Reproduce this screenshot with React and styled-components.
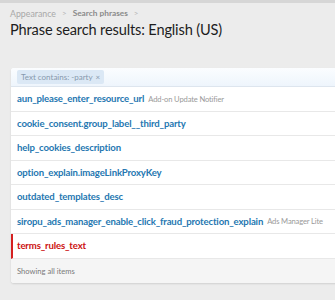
import React from "react";
import styled, { createGlobalStyle } from "styled-components";

const Global = createGlobalStyle`
  html, body { margin: 0; padding: 0; background: #ececec; }
  body { font-family: "Lato", "Open Sans", sans-serif; overflow: hidden; }
`;

const Page = styled.div`
  width: 335px;
  height: 300px;
  box-sizing: border-box;
  border-top: 3px solid #d6d6d6;
  padding: 3px 0 0 10px;
  overflow: hidden;
`;

const Crumbs = styled.div`
  display: flex;
  align-items: center;
  gap: 6px;
  height: 14px;
`;

const Crumb = styled.span`
  font-size: ${(p) => (p.$strong ? "8.3px" : "8.8px")};
  font-weight: ${(p) => (p.$strong ? 700 : 400)};
  color: ${(p) => (p.$strong ? "#8a8a8a" : "#a8a8a8")};
`;

const Sep = styled.span`
  font-size: 8px;
  color: #b5b5b5;
`;

const Title = styled.h1`
  margin: 0;
  font-size: 14.6px;
  font-weight: 400;
  color: #1d1d1d;
  line-height: 20px;
  letter-spacing: -0.15px;
  white-space: nowrap;
`;

const Panel = styled.div`
  margin-top: 28px;
  margin-left: 1px;
  width: 340px;
  background: #fff;
  border-radius: 3px;
  box-shadow: 0 1px 2px rgba(0, 0, 0, 0.12);
  overflow: hidden;
`;

const FilterBar = styled.div`
  height: 18px;
  display: flex;
  align-items: center;
  padding-left: 6px;
  background: linear-gradient(#fbfdff, #eef5fc);
  border-bottom: 1px solid #dde5ee;
`;

const Tag = styled.span`
  display: inline-flex;
  align-items: center;
  gap: 3px;
  height: 14px;
  padding: 0 4px;
  background: #dbe8f5;
  border-radius: 2px;
  font-size: 8px;
  color: #8799ad;
`;

const Row = styled.div`
  height: 23.5px;
  display: flex;
  align-items: center;
  gap: 4px;
  padding-left: ${(p) => (p.$active ? "4px" : "6px")};
  border-bottom: 1px solid #e8e8e8;
  border-left: ${(p) => (p.$active ? "2px solid #d52020" : "none")};
  white-space: nowrap;
`;

const Key = styled.span`
  font-size: 9.6px;
  font-weight: 700;
  letter-spacing: -0.15px;
  color: ${(p) => (p.$active ? "#cc1111" : "#2577b1")};
`;

const Hint = styled.span`
  font-size: 7.6px;
  letter-spacing: -0.15px;
  color: #9a9a9a;
`;

const Footer = styled.div`
  height: 24px;
  display: flex;
  align-items: center;
  padding-left: 6px;
  background: #f5f5f5;
  font-size: 7.6px;
  color: #7a7a7a;
`;

const rows = [
  { key: "aun_please_enter_resource_url", hint: "Add-on Update Notifier" },
  { key: "cookie_consent.group_label__third_party" },
  { key: "help_cookies_description" },
  { key: "option_explain.imageLinkProxyKey" },
  { key: "outdated_templates_desc" },
  { key: "siropu_ads_manager_enable_click_fraud_protection_explain", hint: "Ads Manager Lite" },
  { key: "terms_rules_text", active: true },
];

export default function App() {
  return (
    <>
      <Global />
      <Page>
        <Crumbs>
          <Crumb>Appearance</Crumb>
          <Sep>&gt;</Sep>
          <Crumb $strong>Search phrases</Crumb>
          <Sep>&gt;</Sep>
        </Crumbs>
        <Title>Phrase search results: English (US)</Title>
        <Panel>
          <FilterBar>
            <Tag>Text contains: -party <span>×</span></Tag>
          </FilterBar>
          {rows.map((r) => (
            <Row key={r.key} $active={r.active}>
              <Key $active={r.active}>{r.key}</Key>
              {r.hint && <Hint>{r.hint}</Hint>}
            </Row>
          ))}
          <Footer>Showing all items</Footer>
        </Panel>
      </Page>
    </>
  );
}
